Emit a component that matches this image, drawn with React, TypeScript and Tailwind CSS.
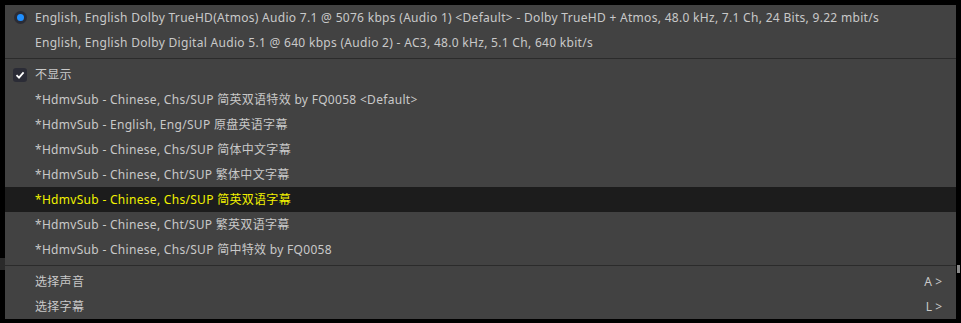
import React from "react";

const font = { fontFamily: '"Noto Sans", "Noto Sans CJK SC", sans-serif' };

function Row({ children, highlight, icon, right }: { children: React.ReactNode; highlight?: boolean; icon?: React.ReactNode; right?: string }) {
  return (
    <div className={`flex h-[25px] items-center ${highlight ? "bg-[#1c1c1c] text-[#f2f200]" : "text-[#c9c9c9]"}`}>
      <div className="flex w-[30px] shrink-0 items-center justify-center">{icon}</div>
      <div className="flex-1 whitespace-nowrap tracking-[0.3px]">{children}</div>
      {right && <div className="pr-[14px] text-[12px] text-[#c9c9c9]">{right}</div>}
    </div>
  );
}

export default function App() {
  const subs = [
    "*HdmvSub - Chinese, Chs/SUP 简英双语特效 by FQ0058 <Default>",
    "*HdmvSub - English, Eng/SUP 原盘英语字幕",
    "*HdmvSub - Chinese, Chs/SUP 简体中文字幕",
    "*HdmvSub - Chinese, Cht/SUP 繁体中文字幕",
    "*HdmvSub - Chinese, Chs/SUP 简英双语字幕",
    "*HdmvSub - Chinese, Cht/SUP 繁英双语字幕",
    "*HdmvSub - Chinese, Chs/SUP 简中特效 by FQ0058",
  ];
  return (
    <div className="relative h-[323px] w-[961px] bg-black pt-[5px] pl-[5px]" style={font}>
      <div className="flex h-[314px] w-[951px] flex-col bg-[#424242] text-[12px]">
        <Row
          icon={
            <span className="flex h-[13px] w-[13px] items-center justify-center rounded-full bg-[#2a2c36]">
              <span className="h-[7px] w-[7px] rounded-full bg-[#1f8fff]" />
            </span>
          }
        >
          English, English Dolby TrueHD(Atmos) Audio 7.1 @ 5076 kbps (Audio 1) &lt;Default&gt; - Dolby TrueHD + Atmos, 48.0 kHz, 7.1 Ch, 24 Bits, 9.22 mbit/s
        </Row>
        <Row>English, English Dolby Digital Audio 5.1 @ 640 kbps (Audio 2) - AC3, 48.0 kHz, 5.1 Ch, 640 kbit/s</Row>
        <div className="my-[3px] h-px bg-[#2b2b2b]" />
        <Row
          icon={
            <span className="flex h-[14px] w-[14px] items-center justify-center rounded-[3px] bg-[#2b2c36]">
              <svg width="10" height="10" viewBox="0 0 10 10">
                <path d="M1.5 5.2 L4 7.6 L8.6 2.4" stroke="#fff" strokeWidth="1.8" fill="none" />
              </svg>
            </span>
          }
        >
          不显示
        </Row>
        {subs.map((s, i) => (
          <Row key={i} highlight={i === 4}>
            {s}
          </Row>
        ))}
        <div className="my-[3px] h-px bg-[#2b2b2b]" />
        <Row right="A >">选择声音</Row>
        <Row right="L >">选择字幕</Row>
      </div>
      <div className="absolute left-[957px] top-[265px] h-[8px] w-[3px] bg-[#8a8a8a]" />
      <div className="absolute left-[0px] top-[258px] h-[12px] w-[5px] bg-[#2a2a2a]" />
    </div>
  );
}
